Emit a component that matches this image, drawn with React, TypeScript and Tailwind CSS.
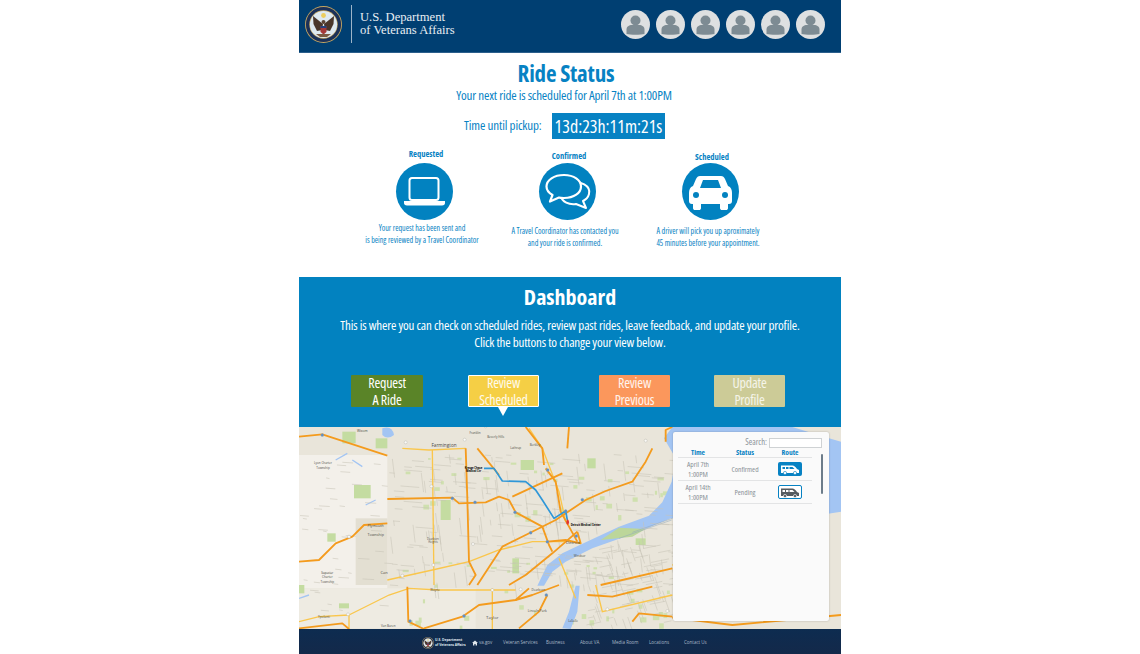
const highways = [
  'M0 35 L70 28 L265 92',
  'M0 410 L60 405 L110 355 L160 335 L195 300 L265 295',
  'M265 222 L460 218 L480 235 L560 232 L600 215 L630 225 L650 262 L730 305 L750 360 L760 380',
  'M535 480 L610 365 L680 330 L770 285 L860 225 L920 198 L1000 170 L1040 110 L1060 70',
  'M740 130 L770 170 L785 260 L835 350',
  'M500 70 L505 220 L510 410 L530 450 L510 480',
  'M535 70 L600 150',
  'M325 485 L328 590 L375 612',
  'M375 610 L490 575 L540 540 L650 525 L690 490',
  'M650 525 L700 510 L780 480',
  'M0 610 L130 595 L150 612',
  'M660 610 L720 560 L745 510',
  'M865 510 L940 515 L1060 485',
  'M905 480 L1120 430',
  'M1000 590 L1020 565 L1120 575',
  'M1100 50 L1100 15 L1120 6',
  'M630 480 L680 450 L760 385 L835 320',
  'M790 145 L640 215',
  'M680 6 L730 70 L735 120',
  'M805 70 L810 6',
  'M745 350 L800 345 L845 355 L835 320',
  'M1120 578 L1300 600 L1626 570',
];

const arterials = [
  'M310 70 L390 75 L500 70',
  'M400 75 L405 480',
  'M265 465 L400 435 L510 410 L600 375 L700 350 L800 350',
  'M150 570 L270 510 L330 490 L420 495 L650 495',
  'M580 490 L580 612',
  'M690 10 L730 70 L780 200 L800 290',
  'M780 400 L830 520',
  'M890 480 L910 560 L1120 510',
  'M0 590 L60 575 L150 570',
  'M150 570 L150 612',
  'M1120 420 L1240 400',
];

const parks = [
  [130, 20, 40, 35],
  [165, 180, 50, 40],
  [230, 40, 35, 30],
  [425, 225, 30, 60],
  [85, 325, 25, 25],
  [0, 480, 16, 25],
  [665, 105, 40, 30],
  [865, 100, 25, 30],
  [640, 400, 20, 45],
  [1010, 340, 30, 20],
  [120, 535, 30, 15],
];

const shields = [
  [70, 30, true],
  [320, 52, false],
  [497, 44, false],
  [397, 184, false],
  [460, 220, true],
  [528, 232, true],
  [648, 262, true],
  [695, 323, true],
  [745, 350, true],
  [800, 258, true],
  [850, 224, true],
  [746, 135, true],
  [150, 335, false],
  [403, 420, false],
  [522, 357, false],
  [310, 452, false],
  [580, 495, false],
  [665, 493, false],
  [742, 510, true],
  [495, 573, true],
  [333, 588, true],
  [147, 568, false],
  [832, 333, true],
  [925, 553, false],
  [1105, 558, false],
  [1040, 47, false],
  [560, 4, false],
] as const;

const labels = [
  { x: 190, y: 22, text: 'Wixom', size: 10 },
  { x: 435, y: 66, text: 'Farmington', size: 14 },
  { x: 528, y: 27, text: 'Franklin', size: 9 },
  { x: 590, y: 38, text: 'Beverly Hills', size: 9 },
  { x: 650, y: 71, text: 'Lathrup', size: 9 },
  { x: 708, y: 62, text: 'Berkley', size: 9 },
  { x: 72, y: 118, text: 'Lyon Charter', size: 9 },
  { x: 72, y: 132, text: 'Township', size: 9 },
  { x: 230, y: 305, text: 'Plymouth', size: 11 },
  { x: 230, y: 333, text: 'Township', size: 11 },
  { x: 85, y: 448, text: 'Superior', size: 9 },
  { x: 85, y: 460, text: 'Charter', size: 9 },
  { x: 85, y: 473, text: 'Township', size: 9 },
  { x: 255, y: 447, text: 'Can', size: 12 },
  { x: 822, y: 357, text: 'Detroit', size: 13 },
  { x: 842, y: 397, text: 'Windsor', size: 9 },
  { x: 580, y: 581, text: 'Taylor', size: 13 },
  { x: 408, y: 499, text: 'Wayne', size: 9 },
  { x: 718, y: 497, text: 'Dearborn', size: 9 },
  { x: 715, y: 560, text: 'Lincoln Park', size: 10 },
  { x: 822, y: 590, text: 'LaSalle', size: 9 },
  { x: 75, y: 580, text: 'Ypsilanti', size: 9 },
  { x: 268, y: 607, text: 'Van Buren', size: 9 },
  { x: 402, y: 345, text: 'Dearborn', size: 8 },
  { x: 402, y: 354, text: 'Heights', size: 8 },
];

// cheap repeatable scatter so the map's side streets stay put between runs
const scatter = (count: number, seed: number) => {
  let n = seed * 7919;
  const next = () => {
    n = (n * 16807) % 2147483647;
    return n / 2147483647;
  };
  return Array.from({ length: count }, () => [next(), next(), next(), next()]);
};

const streets = [
  ...scatter(260, 7).map(([a, b, c, d]) => {
    const x = 270 + a * 850;
    const y = 85 + b * 395;
    const len = 15 + c * 45;
    return d > 0.5 ? `M${x} ${y} L${x + len} ${y + len * 0.08}` : `M${x} ${y} L${x + len * 0.12} ${y + len}`;
  }),
  ...scatter(90, 21).map(([a, b, c, d]) => {
    const x = 860 + a * 260;
    const y = 350 + b * 250;
    const len = 15 + c * 40;
    return d > 0.5 ? `M${x} ${y} L${x + len * 0.35} ${y + len}` : `M${x} ${y} L${x + len} ${y - len * 0.2}`;
  }),
  ...scatter(40, 33).map(([a, b, c]) => {
    const x = a * 260;
    const y = 100 + b * 480;
    return `M${x} ${y} L${x + 10 + c * 25} ${y + 2}`;
  }),
];

const specks = scatter(70, 55).map(([a, b, c, d]) => ({
  x: 300 + a * 820,
  y: b > 0.5 ? 90 + c * 190 : 400 + c * 205,
  w: 6 + d * 14,
  h: 5 + c * 12,
}));

const MapArt = () => (
  <svg viewBox="0 6 1626 606" className="block h-full w-full" preserveAspectRatio="none">
    <rect x="0" y="0" width="1626" height="620" fill="#e9e5da" />
    <rect x="0" y="90" width="265" height="400" fill="#f3f0ea" />
    <rect x="170" y="280" width="95" height="200" fill="#e3dfd2" />
    <rect x="0" y="490" width="530" height="120" fill="#eeebe2" />
    {parks.map(([x, y, w, h]) => (
      <rect key={`${x}-${y}`} x={x} y={y} width={w} height={h} fill="#c4dca1" />
    ))}
    {specks.map((s) => (
      <rect key={`${s.x}-${s.y}`} x={s.x} y={s.y} width={s.w} height={s.h} fill="#cfe0ae" />
    ))}
    <path d="M250 10 Q280 0 285 30 Q265 45 250 30 Z" fill="#a3c5f3" />
    <path d="M110 105 L145 85 M160 105 L190 125 M200 240 L230 225 M0 520 L30 510" stroke="#a3c5f3" strokeWidth="4" fill="none" />
    <path
      d="M715 482 L745 420 L790 385 L860 352 L960 305 L1050 272 L1090 232 L1118 170 L1130 100 L1095 40 L1120 6 L1480 6 L1590 40 L1626 50 L1626 260 L1500 280 L1300 300 L1115 280 L1020 320 L880 370 L800 410 L760 440 L735 482 Z"
      fill="#a3c5f3"
    />
    <path d="M790 610 L810 560 L830 482 L842 482 L835 560 L815 612 Z" fill="#a3c5f3" />
    <path d="M905 345 L960 308 L1040 312 L1000 335 Z" fill="#bcd69a" />
    <path d="M1118 285 L960 340 M1120 280 L1000 322" stroke="#8fa6bd" strokeWidth="1.5" fill="none" />
    <g stroke="#c6c2b5" strokeWidth="1.6" fill="none">
      {streets.map((d) => (
        <path key={d} d={d} />
      ))}
    </g>
    <g stroke="#fac64b" strokeWidth="4" fill="none">
      {arterials.map((d) => (
        <path key={d} d={d} />
      ))}
    </g>
    <g stroke="#f49b1d" strokeWidth="5.5" fill="none" strokeLinejoin="round">
      {highways.map((d) => (
        <path key={d} d={d} />
      ))}
    </g>
    <path
      d="M555 130 L585 130 L610 168 L680 170 L710 195 L730 225 L765 280 L800 258 L805 285"
      stroke="#2f97d8"
      strokeWidth="5"
      fill="none"
      strokeLinejoin="round"
    />
    {shields.map(([x, y, blue]) => (
      <circle key={`${x}-${y}`} cx={x} cy={y} r="4.5" fill={blue ? '#5b8fc9' : '#fbfaf6'} stroke="#a5a59c" strokeWidth="1" />
    ))}
    <path d="M806 283 C799 292 803 298 806 300 C810 296 813 290 806 283 Z" fill="#e3342f" />
    <g fontFamily="Open Sans, sans-serif" fill="#4c4b45" textAnchor="middle">
      {labels.map((label) => (
        <text key={label.text + label.x} x={label.x} y={label.y} fontSize={label.size}>
          {label.text}
        </text>
      ))}
    </g>
    <g fontFamily="Open Sans, sans-serif" fill="#000" fontWeight="700" fontSize="8">
      <text x="497" y="131">Kresge Chase</text>
      <text x="501" y="140">Medical Ctr</text>
      <text x="815" y="302">Detroit Medical Center</text>
    </g>
  </svg>
);

const Seal = ({ size }: { size: number }) => (
  <svg width={size} height={size} viewBox="0 0 37 37" className="shrink-0">
    <circle cx="18.5" cy="18.5" r="18.5" fill="#c6a660" />
    <circle cx="18.5" cy="18.5" r="17.6" fill="#1c3159" />
    <circle cx="18.5" cy="18.5" r="14.2" fill="#c6a660" />
    <circle cx="18.5" cy="18.5" r="13.6" fill="#dfe9f0" />
    <path d="M18 18 L8 10 L8.5 18 L12 25 L17 24 Z" fill="#4a362b" />
    <path d="M19 18 L29 10 L28.5 18 L25 25 L20 24 Z" fill="#4a362b" />
    <path d="M15.5 20 H21.5 V26 L18.5 28.5 L15.5 26 Z" fill="#a5393a" />
    <path d="M15.5 20 H21.5 V22 H15.5 Z" fill="#25417d" />
    <circle cx="18.5" cy="16" r="2" fill="#5a4436" />
    <circle cx="18.5" cy="9.5" r="2.4" fill="#eccd5d" />
    <path d="M11 28 L26 28 L22 31 L15 31 Z" fill="#7b5a42" />
  </svg>
);

const Avatar = () => (
  <div className="flex h-[29px] w-[29px] items-center justify-center rounded-full bg-[#dee0e1]">
    <svg width="29" height="29" viewBox="0 0 29 29">
      <circle cx="14.5" cy="10.5" r="5" fill="#7d8b93" />
      <path
        d="M5.5 24 V19.5 C5.5 16.5 8 15 11 15 H18 C21 15 23.5 16.5 23.5 19.5 V24 C20 25 9 25 5.5 24 Z"
        fill="#7d8b93"
      />
    </svg>
  </div>
);

const LaptopIcon = () => (
  <svg width="57" height="57" viewBox="0 0 57 57">
    <rect x="13.5" y="15" width="29" height="22" rx="2.5" fill="none" stroke="#fff" strokeWidth="2" />
    <path d="M8 38 H49 V40 C49 41.5 48 42.5 46 42.5 H11 C9 42.5 8 41.5 8 40 Z" fill="#fff" />
  </svg>
);

const ChatIcon = () => (
  <svg width="57" height="57" viewBox="0 0 57 57">
    <path
      d="M30 20 C42 17 52 23 50 31 C49 35 46 37 44 38 L47 45 L37 41 C30 42 23 39 22 33 Z"
      fill="#0282c0"
      stroke="#fff"
      strokeWidth="2"
      strokeLinejoin="round"
    />
    <path
      d="M25 12 C35 12 42 17 42 23.5 C42 30 35 35 25 35 C23 35 21 35 20 34.5 L11 38.5 L13.5 32 C10 30 7.5 27 7.5 23.5 C7.5 17 15 12 25 12 Z"
      fill="#0282c0"
      stroke="#fff"
      strokeWidth="2.2"
      strokeLinejoin="round"
    />
  </svg>
);

const CarIcon = () => (
  <svg width="57" height="57" viewBox="0 0 57 57">
    <path
      d="M18 13 H39 C41 13 42 14 43 16 L46 23 C49 24 50 27 50 30 V38 C50 40 49 41 47 41 H46 V45 C46 46.5 45 47 44 47 H40 C39 47 38 46.5 38 45 V41 H19 V45 C19 46.5 18 47 17 47 H13 C12 47 11 46.5 11 45 V41 H10 C8 41 7 40 7 38 V30 C7 27 8 24 11 23 L14 16 C15 14 16 13 18 13 Z"
      fill="#fff"
    />
    <path d="M21 17 H36 L39 25 H18 Z" fill="#0282c0" />
    <circle cx="14" cy="32" r="3" fill="#0282c0" />
    <circle cx="43" cy="32" r="3" fill="#0282c0" />
  </svg>
);

const VanIcon = ({ color, glass }: { color: string; glass: string }) => (
  <svg width="20" height="11" viewBox="0 0 20 11">
    <path d="M1 1.5 H12.5 C14 1.5 15.5 3 17 5 L19 6 V9 H1 Z" fill={color} />
    <path d="M2.5 3 H5 V5 H2.5 Z M6 3 H8.5 V5 H6 Z M9.5 3 H12.5 L14.5 5 H9.5 Z" fill={glass} />
    <circle cx="5" cy="9" r="1.6" fill={color} stroke={glass} strokeWidth="0.6" />
    <circle cx="15" cy="9" r="1.6" fill={color} stroke={glass} strokeWidth="0.6" />
  </svg>
);

const steps = [
  {
    title: 'Requested',
    icon: <LaptopIcon />,
    lines: ['Your request has been sent and', 'is being reviewed by a Travel Coordinator'],
    top: 'pt-0',
    gap: 'mt-[4px]',
    after: 'mt-[2px]',
  },
  {
    title: 'Confirmed',
    icon: <ChatIcon />,
    lines: ['A Travel Coordinator has contacted you', 'and your ride is confirmed.'],
    top: 'pt-[2px]',
    gap: 'mt-[2px]',
    after: 'mt-[5px]',
  },
  {
    title: 'Scheduled',
    icon: <CarIcon />,
    lines: ['A driver will pick you up aproximately', '45 minutes before your appointment.'],
    top: 'pt-[3px]',
    gap: 'mt-px',
    after: 'mt-[5px]',
  },
];

const actions = [
  { lines: ['Request', 'A Ride'], bg: 'bg-[#5a8428]', x: 'ml-[52px] w-[72px]', text: 'text-white' },
  { lines: ['Review', 'Scheduled'], bg: 'bg-[#f5cf45] border border-white', x: 'ml-[45px] w-[71px]', text: 'text-white/90', active: true },
  { lines: ['Review', 'Previous'], bg: 'bg-[#fb975c]', x: 'ml-[60px] w-[71px]', text: 'text-white/90' },
  { lines: ['Update', 'Profile'], bg: 'bg-[#cccb97]', x: 'ml-[44px] w-[71px]', text: 'text-white/80' },
];

const rides = [
  { date: 'April 7th', status: 'Confirmed', active: true },
  { date: 'April 14th', status: 'Pending', active: false },
];

const footerLinks = [
  { label: 'Veteran Services', x: 'ml-[11px]', w: 'w-[30px]' },
  { label: 'Business', x: 'ml-[13px]', w: 'w-[16px]' },
  { label: 'About VA', x: 'ml-[18px]', w: 'w-[16px]' },
  { label: 'Media Room', x: 'ml-[16px]', w: 'w-[22px]' },
  { label: 'Locations', x: 'ml-[15px]', w: 'w-[18px]' },
  { label: 'Contact Us', x: 'ml-[17px]', w: 'w-[19px]' },
];

const App = () => (
  <div className="h-[654px] w-[1140px] overflow-hidden bg-white">
    <div className="ml-[299px] flex h-[654px] w-[542px] flex-col font-['Open_Sans',sans-serif]">
      <header className="flex h-[53px] shrink-0 items-center border-b border-[#2b5f8c] bg-[#003f72] pb-[4px] pl-[6px] pr-[16px]">
        <Seal size={37} />
        <div className="ml-[9px] h-[38px] w-px bg-[#9db4c8]" />
        <div className="ml-[8px] font-['Liberation_Serif',serif] text-[12.6px] leading-[13.5px] text-[#e8eef3]">
          <p>U.S. Department</p>
          <p>of Veterans Affairs</p>
        </div>
        <div className="ml-auto flex gap-[6px]">
          {[0, 1, 2, 3, 4, 5].map((i) => (
            <Avatar key={i} />
          ))}
        </div>
      </header>

      <section className="flex h-[224px] shrink-0 flex-col text-[#0782c3]">
        <h1 className="mt-[6px] whitespace-nowrap pr-[8px] text-center text-[23px] font-bold leading-[28px] tracking-[-0.2px] font-stretch-condensed">
          Ride Status
        </h1>
        <p className="whitespace-nowrap pr-[12px] text-center text-[13px] leading-[16px] tracking-[-0.16px] font-stretch-condensed">
          Your next ride is scheduled for April 7th at 1:00PM
        </p>
        <div className="mt-[10px] flex h-[26px] items-center pl-[165px]">
          <span className="w-[88px] whitespace-nowrap text-[13px] tracking-[-0.12px] font-stretch-condensed">Time until pickup:</span>
          <span className="flex h-[26px] w-[113px] items-center justify-center whitespace-nowrap bg-[#0782c3] text-[18px] text-white font-stretch-condensed">
            13d:23h:11m:21s
          </span>
        </div>
        <div className="mt-[9px] flex pl-[54px]">
          {steps.map((step) => (
            <div key={step.title} className={`flex w-[143px] flex-col items-center ${step.top}`}>
              <p className="pl-[3px] text-[8.5px] font-bold leading-[11px] font-stretch-condensed">{step.title}</p>
              <div className={`h-[57px] w-[57px] rounded-full bg-[#0282c0] ${step.gap}`}>{step.icon}</div>
              <div className={`whitespace-nowrap pr-[5px] text-center text-[8px] leading-[11.5px] font-stretch-condensed ${step.after}`}>
                {step.lines.map((line) => (
                  <p key={line}>{line}</p>
                ))}
              </div>
            </div>
          ))}
        </div>
      </section>

      <section className="flex h-[150px] shrink-0 flex-col bg-[#0282c0] text-white">
        <h2 className="mt-[5px] text-center text-[22px] font-bold leading-[28px] font-stretch-condensed">Dashboard</h2>
        <div className="mt-[7px] whitespace-nowrap text-center text-[13px] leading-[17px] tracking-[-0.16px] font-stretch-condensed">
          <p>This is where you can check on scheduled rides, review past rides, leave feedback, and update your profile.</p>
          <p>Click the buttons to change your view below.</p>
        </div>
        <div className="mt-[24px] flex">
          {actions.map((action) => (
            <div
              key={action.lines[1]}
              className={`relative flex h-[32px] flex-col items-center justify-center rounded-[1px] text-[14px] leading-[17px] tracking-[-0.2px] font-stretch-condensed ${action.bg} ${action.x} ${action.text}`}
            >
              {action.lines.map((line) => (
                <p key={line}>{line}</p>
              ))}
              {action.active && (
                <div className="absolute left-[29px] top-[31px] h-0 w-0 border-x-[5px] border-t-[9px] border-x-transparent border-t-white" />
              )}
            </div>
          ))}
        </div>
      </section>

      <section className="relative h-[202px] shrink-0 overflow-hidden">
        <MapArt />
        <div className="absolute left-[374px] top-[5px] flex h-[189px] w-[156px] flex-col rounded-[2px] bg-[#fafafa] pl-[5px] pt-[5px] text-[8px] text-[#8b9298] shadow-[0_0_2px_rgba(0,0,0,0.25)]">
          <div className="flex h-[11px] items-center justify-end pr-[7px] text-[8.5px] font-stretch-condensed">
            <span className="mr-[2px]">Search:</span>
            <div className="h-[10px] w-[53px] border border-[#cfd2d4] bg-white" />
          </div>
          <div className="box-content grid h-[9px] w-[134px] grid-cols-[40px_54px_36px] items-center border-b border-[#e3e4e5] text-center text-[7.5px] font-bold leading-[9px] text-[#0782c3] font-stretch-condensed">
            <span>Time</span>
            <span>Status</span>
            <span>Route</span>
          </div>
          {rides.map((ride) => (
            <div
              key={ride.date}
              className="box-content grid h-[22px] w-[134px] grid-cols-[40px_54px_36px] items-center border-b border-[#e3e4e5] text-center text-[7.5px] leading-[10px] font-stretch-condensed"
            >
              <div>
                <p>{ride.date}</p>
                <p>1:00PM</p>
              </div>
              <span>{ride.status}</span>
              <div
                className={`mx-auto flex h-[14px] w-[24px] items-center justify-center rounded-[2px] ${
                  ride.active ? 'bg-[#0782c3]' : 'border border-[#0782c3] bg-white'
                }`}
              >
                <VanIcon color={ride.active ? '#fff' : '#555b60'} glass={ride.active ? '#0782c3' : '#fff'} />
              </div>
            </div>
          ))}
          <div className="absolute left-[148px] top-[22px] h-[40px] w-[2px] rounded-full bg-[#6c7c8a]" />
        </div>
      </section>

      <footer className="flex min-h-0 flex-1 items-center bg-gradient-to-b from-[#0d2c50] to-[#13294a] pl-[123px] pt-[2px] text-[4.5px] leading-none text-[#a9b8c6]">
        <Seal size={12} />
        <div className="ml-[1px] w-[37px] text-[3.3px] font-bold leading-[4.2px] text-[#dfe6ec]">
          <p className="whitespace-nowrap">U.S. Department</p>
          <p className="whitespace-nowrap">of Veterans Affairs</p>
        </div>
        <svg width="6" height="6" viewBox="0 0 6 6" className="shrink-0">
          <path d="M3 0.5 L6 3 H5 V5.5 H3.6 V4 H2.4 V5.5 H1 V3 H0 Z" fill="#dfe6ec" />
        </svg>
        <span className="ml-[1px] w-[13px]">va.gov</span>
        {footerLinks.map((link) => (
          <span key={link.label} className={`whitespace-nowrap ${link.x} ${link.w}`}>
            {link.label}
          </span>
        ))}
      </footer>
    </div>
  </div>
);

export default App;
